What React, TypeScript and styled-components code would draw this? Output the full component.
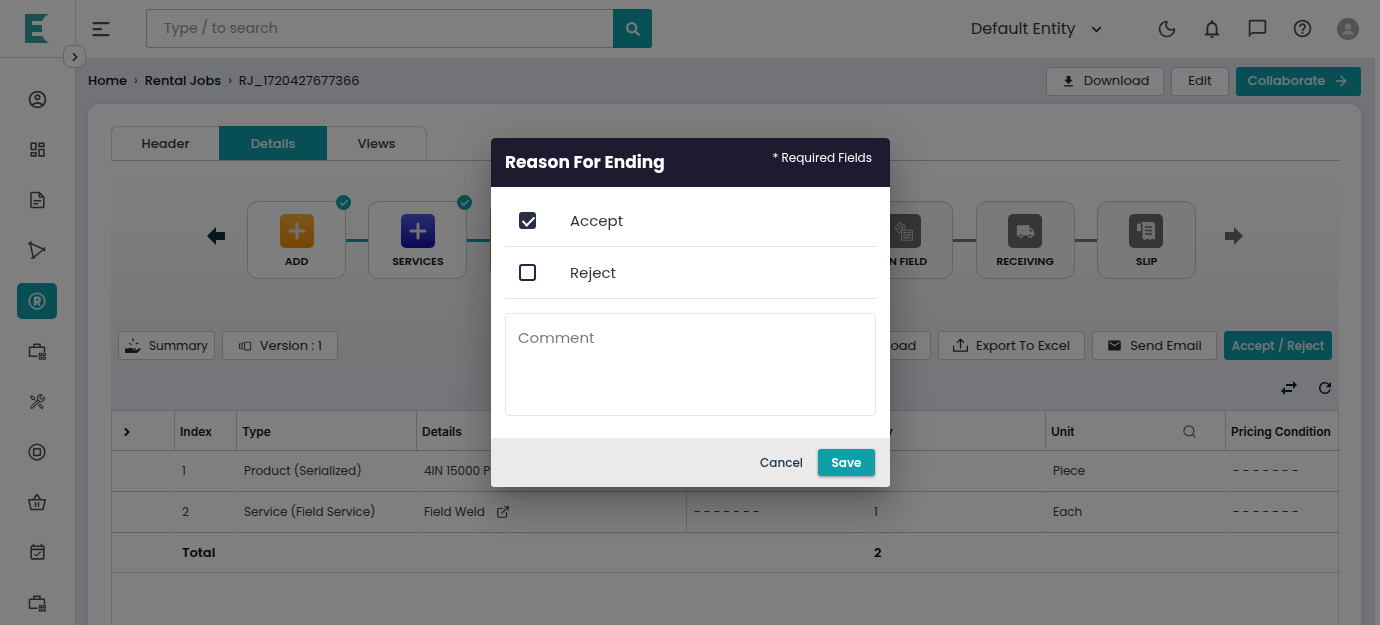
import React from "react";
import styled, { createGlobalStyle, css } from "styled-components";
import {
  MdChatBubbleOutline,
  MdEmail,
  MdFileDownload,
  MdHelpOutline,
  MdLocalShipping,
  MdOutlineAccountCircle,
  MdOutlineDashboard,
  MdOutlineEventAvailable,
  MdOutlineNotifications,
  MdRefresh,
} from "react-icons/md";
import { FaSearch } from "react-icons/fa";
import { VscTools, VscVersions } from "react-icons/vsc";
import { ArrowRight, Check, ChevronDown, ChevronRight, ExternalLink, Moon, Plus, Search } from "lucide-react";

const color = {
  teal: "#0f9fa9",
  navy: "#1c1b2f",
  ink: "#0e2230",
  text: "#1d1f24",
  icon: "#4c4c4c",
  line: "#d3d4d6",
  page: "#e5e7f2",
};

const GlobalStyle = createGlobalStyle`
  * { box-sizing: border-box; }
  body {
    margin: 0;
    font-family: Poppins, Inter, "Liberation Sans", sans-serif;
    font-size: 13px;
    color: ${color.text};
    background: #fff;
  }
  button, input, select, textarea { font: inherit; color: inherit; }
  button { cursor: pointer; }
`;

const Shell = styled.div`
  display: flex;
  height: 100vh;
  overflow: hidden;
`;

/* ---------- sidebar ---------- */

const Sidebar = styled.aside`
  position: relative;
  flex: none;
  width: 76px;
  display: flex;
  flex-direction: column;
  background: #fff;
  border-right: 1px solid ${color.line};
`;

const LogoArea = styled.div`
  height: 58px;
  flex: none;
  display: flex;
  align-items: center;
  justify-content: center;
  padding-right: 1px;
  border-bottom: 1px solid ${color.line};
`;

const ExpandButton = styled.button`
  position: absolute;
  top: 45px;
  right: -11px;
  z-index: 1;
  width: 23px;
  height: 23px;
  padding: 0;
  display: grid;
  place-items: center;
  border: 1px solid #c4c6ca;
  border-radius: 8px;
  background: #fff;
`;

const Nav = styled.nav`
  flex: 1;
  display: flex;
  flex-direction: column;
  align-items: center;
  justify-content: space-between;
  padding: 23px 1px 4px 0;
`;

const NavLink = styled.a<{ $active?: boolean }>`
  width: 40px;
  height: 36px;
  display: grid;
  place-items: center;
  border-radius: 5px;
  color: ${(p) => (p.$active ? "#e8f3f4" : color.icon)};
  background: ${(p) => (p.$active ? color.teal : "transparent")};
`;

/* ---------- top bar ---------- */

const Main = styled.div`
  flex: 1;
  min-width: 0;
  display: flex;
  flex-direction: column;
`;

const TopBar = styled.header`
  flex: none;
  height: 58px;
  display: flex;
  align-items: center;
  padding: 0 21px 1px 16px;
  background: #fff;
`;

const IconButton = styled.button`
  display: grid;
  place-items: center;
  padding: 0;
  border: 0;
  background: none;
  color: ${color.icon};
`;

const SearchForm = styled.form`
  display: flex;
  width: 506px;
  height: 39px;
  margin-left: 36px;
`;

const SearchInput = styled.input`
  flex: 1;
  min-width: 0;
  padding: 0 17px;
  border: 1px solid #b9bcc2;
  border-right: 0;
  border-radius: 3px 0 0 3px;
  font-size: 14px;
  background: #fff;
  &::placeholder { color: #8e94a3; opacity: 1; }
`;

const SearchButton = styled.button`
  width: 39px;
  display: grid;
  place-items: center;
  padding: 0;
  border: 0;
  border-radius: 0 3px 3px 0;
  background: ${color.teal};
  color: #e8f3f4;
`;

const EntityPicker = styled.label`
  position: relative;
  margin-left: auto;
  margin-right: 53px;
  color: #3a3a3a;
  svg {
    position: absolute;
    right: 0;
    top: 5px;
    pointer-events: none;
  }
`;

const EntitySelect = styled.select`
  appearance: none;
  width: 133px;
  padding: 0;
  border: 0;
  background: none;
  font-size: 16px;
  line-height: 24px;
`;

const TopActions = styled.div`
  display: flex;
  align-items: center;
  gap: 24px;
`;

/* ---------- page ---------- */

const Page = styled.main`
  flex: 1;
  min-height: 0;
  margin-right: 5px;
  padding: 0 14px 0 12px;
  display: flex;
  flex-direction: column;
  background: ${color.page};
`;

const PageHead = styled.div`
  flex: none;
  height: 46px;
  display: flex;
  align-items: center;
  justify-content: space-between;
`;

const Crumbs = styled.nav`
  display: flex;
  align-items: center;
  gap: 7px;
  font-size: 13px;
  a { color: #10131c; font-weight: 500; text-decoration: none; }
`;

const ButtonRow = styled.div`
  display: flex;
  align-items: center;
  gap: 7px;
`;

const Button = styled.button<{ $primary?: boolean; $small?: boolean; $width: number }>`
  min-width: ${(p) => p.$width}px;
  height: 29px;
  padding: 0 6px;
  display: flex;
  align-items: center;
  justify-content: center;
  gap: 8px;
  font-size: ${(p) => (p.$small ? 12 : 13)}px;
  white-space: nowrap;
  border: 1px solid #c6c8cc;
  border-radius: 3px;
  background: #fff;
  color: #2a2a2e;
  ${(p) =>
    p.$primary &&
    css`
      border-color: ${color.teal};
      background: ${color.teal};
      color: #e8f3f4;
      font-weight: 500;
    `}
`;

const Card = styled.section`
  flex: 1;
  min-height: 0;
  display: flex;
  flex-direction: column;
  padding: 22px 22px 0 23px;
  border-radius: 12px 12px 0 0;
  background: #fff;
  box-shadow: 0 0 10px rgba(120, 125, 160, 0.16);
`;

const Tabs = styled.div`
  flex: none;
  height: 35px;
  display: flex;
  border-bottom: 1px solid #bdbfc3;
`;

const Tab = styled.button<{ $active?: boolean }>`
  width: 108px;
  padding: 0;
  border: 1px solid ${color.line};
  border-bottom: 0;
  background: #fff;
  color: #3c3c3c;
  font-size: 13px;
  font-weight: 500;
  &:first-child { border-radius: 6px 0 0 0; border-right: 0; }
  &:last-child { width: 100px; border-radius: 0 8px 0 0; border-left: 0; }
  ${(p) =>
    p.$active &&
    css`
      border-color: ${color.teal};
      background: ${color.teal};
      color: #e8f3f4;
    `}
`;

const Workspace = styled.div`
  flex: none;
  display: flex;
  flex-direction: column;
  background: linear-gradient(#fff, #f4f5f8 45%, #ededf3 75%, #e9ebf3);
`;

/* ---------- steps ---------- */

const Stepper = styled.div`
  display: flex;
  align-items: center;
  padding: 40px 96px 52px;
`;

const StepArrow = styled.button<{ $muted?: boolean }>`
  width: 18px;
  height: 18px;
  padding: 0;
  border: 0;
  background: none;
  color: ${(p) => (p.$muted ? "#6c6c6c" : "#10303d")};
  transform: translateY(-4px);
  svg { display: block; }
`;

const StepList = styled.ol`
  flex: 1;
  display: flex;
  align-items: center;
  margin: 0 29px 0 22px;
  padding: 0;
  list-style: none;
`;

const StepItem = styled.li`
  display: flex;
  align-items: center;
  flex: 1 1 auto;
  &:last-child { flex: none; }
`;

const StepCard = styled.div<{ $current?: boolean; $done?: boolean }>`
  position: relative;
  flex: none;
  width: 99px;
  height: 78px;
  display: flex;
  flex-direction: column;
  align-items: center;
  padding-top: 12px;
  gap: 5px;
  border: 1px solid #c6c6c8;
  border-radius: 11px;
  background: ${(p) => (p.$done ? "#fdfdfe" : "#f5f5f7")};
  font-size: 11px;
  line-height: 16px;
  font-weight: 600;
  color: #17171a;
  ${(p) => p.$current && css`border: 2px solid #e8892b;`}
`;

const StepIcon = styled.span<{ $fill: string }>`
  width: 34px;
  height: 34px;
  display: grid;
  place-items: center;
  border-radius: 5px;
  background: ${(p) => p.$fill};
  color: #e2e2e2;
`;

const StepBadge = styled.span`
  position: absolute;
  top: -7px;
  right: -6px;
  width: 15px;
  height: 15px;
  display: grid;
  place-items: center;
  border-radius: 50%;
  background: ${color.teal};
  color: #e8f3f4;
`;

const Connector = styled.span<{ $done?: boolean }>`
  flex: 1;
  height: 3px;
  background: ${(p) => (p.$done ? color.teal : "#78787a")};
`;

/* ---------- table ---------- */

const Toolbar = styled.div`
  display: flex;
  justify-content: space-between;
  padding: 0 7px;
`;

const TableTools = styled.div`
  height: 50px;
  display: flex;
  align-items: center;
  justify-content: flex-end;
  gap: 19px;
  padding: 6px 5px 0 0;
  button { color: ${color.ink}; }
`;

const TableFrame = styled.div`
  flex: 1;
  min-height: 0;
  border: solid ${color.line};
  border-width: 1px 1px 0;
  background: #fff;
`;

const Table = styled.table`
  width: 100%;
  table-layout: fixed;
  border-collapse: separate;
  border-spacing: 0;
`;

const Th = styled.th<{ $open?: boolean }>`
  height: 40px;
  padding: 2px 5px 0;
  text-align: left;
  font-family: Inter, "Liberation Sans", sans-serif;
  font-size: 12px;
  font-weight: 600;
  color: #17171a;
  white-space: nowrap;
  border-bottom: 1px solid #bfc1c9;
  border-right: 1px solid ${(p) => (p.$open ? "transparent" : "#c8cacd")};
  &:last-child { border-right: 0; }
`;

const ExpandTh = styled(Th)`
  padding-left: 9px;
  svg { display: block; }
`;

const HeadLine = styled.div`
  display: flex;
  align-items: center;
  justify-content: space-between;
  padding-right: 23px;
`;

const Td = styled.td<{ $edge?: boolean }>`
  height: 41px;
  padding: 0 7px;
  font-size: 12px;
  color: #3a3c42;
  white-space: nowrap;
  overflow: hidden;
  border-bottom: 1px solid #b9bcc9;
  border-right: 1px solid ${(p) => (p.$edge ? color.line : "transparent")};
`;

const TotalCell = styled.td`
  height: 40px;
  padding: 0 7px;
  font-size: 13px;
  font-weight: 600;
  color: #111;
  border-bottom: 1px solid #d8d8d8;
`;

const LinkedName = styled.span`
  display: flex;
  align-items: center;
  gap: 11px;
`;

/* ---------- dialog ---------- */

const Backdrop = styled.div`
  position: fixed;
  inset: 0;
  z-index: 10;
  display: flex;
  align-items: center;
  justify-content: center;
  padding-left: 1px;
  background: rgba(0, 0, 0, 0.5);
`;

const Dialog = styled.form`
  width: 399px;
  max-width: 100%;
  border-radius: 4px;
  overflow: hidden;
  background: #fff;
  box-shadow: 0 11px 15px -7px rgba(0, 0, 0, 0.2), 0 24px 38px 3px rgba(0, 0, 0, 0.14),
    0 9px 46px 8px rgba(0, 0, 0, 0.12);
`;

const DialogHead = styled.header`
  height: 49px;
  display: flex;
  justify-content: space-between;
  padding: 12px 18px 0 14px;
  background: ${color.navy};
  color: #fff;
  h2 { margin: 0; font-size: 17px; line-height: 24px; font-weight: 700; }
  span { font-size: 12px; line-height: 16px; font-weight: 400; }
`;

const DialogBody = styled.div`
  padding: 8px 14px 22px;
`;

const Option = styled.label`
  height: 52px;
  display: flex;
  align-items: center;
  gap: 34px;
  padding-left: 14px;
  border-bottom: 1px solid #e4e4e4;
  font-size: 15px;
  color: #333;
`;

const Checkbox = styled.input`
  appearance: none;
  position: relative;
  width: 17px;
  height: 17px;
  margin: 0;
  border: 2px solid #1f2844;
  border-radius: 3px;
  background: #fff;
  &:checked { border-color: #2a2f45; background: #2a2f45; }
  &:checked::after {
    content: "";
    position: absolute;
    left: 4px;
    top: 0;
    width: 5px;
    height: 10px;
    border: solid #fff;
    border-width: 0 2px 2px 0;
    transform: rotate(45deg);
  }
`;

const Comment = styled.textarea`
  display: block;
  width: 100%;
  height: 103px;
  margin-top: 14px;
  padding: 14px 12px;
  resize: none;
  border: 1px solid #e6e6e6;
  border-radius: 4px;
  font-size: 15px;
  line-height: 20px;
  &::placeholder { color: #7b7b7b; opacity: 1; }
`;

const DialogFoot = styled.footer`
  height: 49px;
  display: flex;
  align-items: center;
  justify-content: flex-end;
  gap: 15px;
  padding-right: 15px;
  background: #eaeaea;
`;

const DialogButton = styled.button<{ $primary?: boolean }>`
  height: 27px;
  padding: 0;
  border: 0;
  background: none;
  font-size: 12px;
  font-weight: 500;
  color: #1f3444;
  ${(p) =>
    p.$primary &&
    css`
      width: 57px;
      border-radius: 3px;
      background: ${color.teal};
      color: #fff;
      font-weight: 600;
      box-shadow: 0 1px 3px rgba(0, 0, 0, 0.4);
    `}
`;

/* ---------- drawings ---------- */

type LineIconProps = { size?: number; width?: number; children: React.ReactNode };

const LineIcon = ({ size = 18, width = 2, children }: LineIconProps) => (
  <svg
    width={size}
    height={size}
    viewBox="0 0 24 24"
    fill="none"
    stroke="currentColor"
    strokeWidth={width}
    strokeLinejoin="round"
    strokeLinecap="round"
    aria-hidden="true"
  >
    {children}
  </svg>
);

const Logo = () => (
  <svg width="24" height="29" viewBox="0 0 24 29" aria-hidden="true">
    <path
      fill="#35a39f"
      d="M0 0h24l-4 2.500-3 4.500H7v4h10v7H7v4h10l3 4 4 3H0z"
    />
  </svg>
);

const DocumentIcon = () => (
  <LineIcon>
    <path d="M4 2h11l6 6v14H4zM15 2v6h6M8 13h9M8 17h5" />
  </LineIcon>
);

const PlayIcon = () => (
  <LineIcon>
    <path d="M3 3l18 8L7 22zM1 4l3-3M22 9v4M5 23l4-1" />
  </LineIcon>
);

const RegisteredIcon = () => (
  <LineIcon>
    <circle cx="12" cy="12" r="10.5" />
    <path strokeWidth="3" strokeLinecap="butt" d="M9.500 18V7.500H13a2.500 2.500 0 0 1 0 5.500H9.500M12.500 13l3 5" />
  </LineIcon>
);

const BriefcaseIcon = () => (
  <LineIcon>
    <path d="M12 19H2V7h20v6M8 7V3h8v4" />
    <path strokeWidth="1.500" d="M15 15h3v3h-3zM20 15h3v3h-3zM15 20h3v3h-3zM20 20h3v3h-3z" />
  </LineIcon>
);

const TargetIcon = () => (
  <LineIcon>
    <circle cx="12" cy="12" r="10.500" />
    <rect x="7.500" y="7.500" width="9" height="9" rx="2.500" />
    <path strokeWidth="1" d="M6.500 6.500l1 1M17.500 6.500l-1 1M6.500 17.500l1-1M17.500 17.500l-1-1" />
  </LineIcon>
);

const BasketIcon = () => (
  <LineIcon>
    <path d="M1 9h22l-3 13H4zM7 9l5-7 5 7M10 13v5M14 13v5" />
  </LineIcon>
);

const MenuIcon = () => (
  <LineIcon width={3}>
    <path d="M2 4h20M2 12h10M2 20h20" />
  </LineIcon>
);

const AvatarIcon = () => (
  <svg width="22" height="22" viewBox="0 0 22 22" aria-hidden="true">
    <circle cx="11" cy="11" r="11" fill="#a6a6a6" />
    <circle cx="11" cy="8.500" r="3" fill="#e0e0e0" />
    <path fill="#e0e0e0" d="M5.500 16.500c0-3 3-4 5.500-4s5.500 1 5.500 4z" />
  </svg>
);

const BlockArrow = ({ flip }: { flip?: boolean }) => (
  <svg width="18" height="18" viewBox="0 0 18 18" aria-hidden="true">
    <path fill="currentColor" d={flip ? "M18 9L9 0v5H0v8h9v5z" : "M0 9l9-9v5h9v8H9v5z"} />
  </svg>
);

const SwapIcon = () => (
  <svg width="16" height="14" viewBox="0 0 16 14" aria-hidden="true">
    <path stroke="currentColor" strokeWidth="2" d="M5 4h8M3 10h8" />
    <path fill="currentColor" d="M12 0l4 4-4 4zM4 6l-4 4 4 4z" />
  </svg>
);

const HandIcon = () => (
  <svg width="16" height="16" viewBox="0 0 16 16" fill="currentColor" aria-hidden="true">
    <path d="M0 10.500h3c1.500-1.300 3.500-1 4.500 0h3c.8 0 .8 1 0 1.200H7.500v.6H11l3.400-2c1-.5 1.800.4 1.200 1.100L12 15H0z" />
    <path d="M7.500 0l1.500 2-.5 1.500L7 2zM3.500 5l2.500.5L7.500 7 5 6.600zM10.500 5.500l2.500-1 .5.7-2 1.300z" />
  </svg>
);

const UploadIcon = () => (
  <LineIcon size={15}>
    <path d="M1 13v8h22v-8M12 16V3M7 7l5-5 5 5" />
  </LineIcon>
);

const FieldIcon = () => (
  <LineIcon size={20} width={1}>
    <path d="M9 20v-9h13v12H9zM11 14h9M11 17h9M11 20h9M13 13v2M17 16v2M14 19v2" />
    <circle cx="8" cy="8" r="2.500" />
    <path d="M7 14H5l-.5-2L2 11l1-2.500L1 7l1.500-2L5 5l.5-3h3l1 2.500L12 4l1.500 2L12 8l2 1" />
  </LineIcon>
);

const SlipIcon = () => (
  <svg width="20" height="20" viewBox="0 0 20 20" aria-hidden="true">
    <path fill="currentColor" d="M3 1h13c2 0 3 1 3 3v15l-2.500-1.500L14 19l-2.500-1.500L9 19l-2.500-1.500V4C6.500 2 5 1 3 1zM1 4c0-2 4-2 4 0v6H1z" />
    <path stroke="#6c6c6c" strokeWidth="1.500" d="M9 6h7M9 9.500h7M9 13h7" />
  </svg>
);

/* ---------- data ---------- */

const navItems = [
  { label: "Profile", icon: <MdOutlineAccountCircle size={21} /> },
  { label: "Dashboard", icon: <MdOutlineDashboard size={19} /> },
  { label: "Documents", icon: <DocumentIcon /> },
  { label: "Activity", icon: <PlayIcon /> },
  { label: "Rental Jobs", icon: <RegisteredIcon />, active: true },
  { label: "Assets", icon: <BriefcaseIcon /> },
  { label: "Tools", icon: <VscTools size={17} /> },
  { label: "Support", icon: <TargetIcon /> },
  { label: "Orders", icon: <BasketIcon /> },
  { label: "Schedule", icon: <MdOutlineEventAvailable size={19} /> },
  { label: "Inventory", icon: <BriefcaseIcon /> },
];

const plus = <Plus size={24} strokeWidth={3} />;
const gray = "#6c6c6c";

const steps = [
  { label: "ADD", fill: "linear-gradient(#f5ad35, #ef8b0a)", icon: plus, done: true },
  { label: "SERVICES", fill: "linear-gradient(#4a5fd8, #1c0cae)", icon: plus, done: true },
  { label: "QUOTE", fill: "#e8892b", icon: plus, current: true },
  { label: "ORDER", fill: gray, icon: plus },
  { label: "LOADING", fill: gray, icon: plus },
  { label: "ON FIELD", fill: gray, icon: <FieldIcon /> },
  { label: "RECEIVING", fill: gray, icon: <MdLocalShipping size={19} /> },
  { label: "SLIP", fill: gray, icon: <SlipIcon /> },
];

const dashes = "- - - - - - -";

const rows = [
  { index: 1, type: "Product (Serialized)", details: "4IN 15000 PSI Valve", qty: 1, unit: "Piece" },
  { index: 2, type: "Service (Field Service)", details: "Field Weld", qty: 1, unit: "Each", link: true },
];

const columnWidths = [63, 62, 180, 270, 180, 179, 180, 114];

/* ---------- screen ---------- */

export default function App() {
  return (
    <>
      <GlobalStyle />
      <Shell>
        <Sidebar>
          <LogoArea>
            <Logo />
          </LogoArea>
          <ExpandButton aria-label="Expand menu">
            <ChevronRight size={14} />
          </ExpandButton>
          <Nav>
            {navItems.map((item) => (
              <NavLink key={item.label} href="#" aria-label={item.label} $active={item.active}>
                {item.icon}
              </NavLink>
            ))}
          </Nav>
        </Sidebar>
        <Main>
          <TopBar>
            <IconButton aria-label="Menu">
              <MenuIcon />
            </IconButton>
            <SearchForm>
              <SearchInput aria-label="Search" placeholder="Type / to search" />
              <SearchButton aria-label="Search" type="button">
                <FaSearch size={14} />
              </SearchButton>
            </SearchForm>
            <EntityPicker>
              <EntitySelect aria-label="Entity">
                <option>Default Entity</option>
              </EntitySelect>
              <ChevronDown size={15} strokeWidth={3} />
            </EntityPicker>
            <TopActions>
              <IconButton aria-label="Dark mode"><Moon size={20} /></IconButton>
              <IconButton aria-label="Notifications"><MdOutlineNotifications size={22} /></IconButton>
              <IconButton aria-label="Messages"><MdChatBubbleOutline size={21} /></IconButton>
              <IconButton aria-label="Help"><MdHelpOutline size={21} /></IconButton>
              <IconButton aria-label="Account"><AvatarIcon /></IconButton>
            </TopActions>
          </TopBar>
          <Page>
            <PageHead>
              <Crumbs aria-label="Breadcrumb">
                <a href="#">Home</a>
                <span>›</span>
                <a href="#">Rental Jobs</a>
                <span>›</span>
                <span>RJ_1720427677366</span>
              </Crumbs>
              <ButtonRow>
                <Button $width={118}><MdFileDownload size={15} />Download</Button>
                <Button $width={58}>Edit</Button>
                <Button $width={125} $primary>Collaborate<ArrowRight size={16} /></Button>
              </ButtonRow>
            </PageHead>
            <Card>
              <Tabs role="tablist">
                <Tab role="tab">Header</Tab>
                <Tab role="tab" aria-selected="true" $active>Details</Tab>
                <Tab role="tab">Views</Tab>
              </Tabs>
              <Workspace>
                <Stepper>
                  <StepArrow aria-label="Previous"><BlockArrow /></StepArrow>
                  <StepList>
                    {steps.map((step, i) => (
                      <StepItem key={step.label}>
                        <StepCard $current={step.current} $done={step.done}>
                          <StepIcon $fill={step.fill}>{step.icon}</StepIcon>
                          {step.label}
                          {step.done && (
                            <StepBadge><Check size={10} strokeWidth={3} /></StepBadge>
                          )}
                        </StepCard>
                        {i < steps.length - 1 && <Connector $done={step.done} />}
                      </StepItem>
                    ))}
                  </StepList>
                  <StepArrow aria-label="Next" $muted><BlockArrow flip /></StepArrow>
                </Stepper>
                <Toolbar>
                  <ButtonRow>
                    <Button $width={96} $small><HandIcon />Summary</Button>
                    <Button $width={116}><VscVersions size={14} />Version : 1</Button>
                  </ButtonRow>
                  <ButtonRow>
                    <Button $width={118}><MdFileDownload size={15} />Download</Button>
                    <Button $width={147}><UploadIcon />Export To Excel</Button>
                    <Button $width={125}><MdEmail size={15} />Send Email</Button>
                    <Button $width={108} $small $primary>Accept / Reject</Button>
                  </ButtonRow>
                </Toolbar>
                <TableTools>
                  <IconButton aria-label="Swap columns"><SwapIcon /></IconButton>
                  <IconButton aria-label="Refresh"><MdRefresh size={18} /></IconButton>
                </TableTools>
              </Workspace>
              <TableFrame>
                <Table>
                  <colgroup>
                    {columnWidths.map((w, i) => (
                      <col key={i} width={w} />
                    ))}
                  </colgroup>
                  <thead>
                    <tr>
                      <ExpandTh aria-label="Expand"><ChevronRight size={12} strokeWidth={4} /></ExpandTh>
                      <Th>Index</Th>
                      <Th>Type</Th>
                      <Th>Details</Th>
                      <Th $open>Comment</Th>
                      <Th>Qty</Th>
                      <Th><HeadLine>Unit<Search size={15} color="#666" /></HeadLine></Th>
                      <Th>Pricing Condition</Th>
                    </tr>
                  </thead>
                  <tbody>
                    {rows.map((row) => (
                      <tr key={row.index}>
                        <Td />
                        <Td>{row.index}</Td>
                        <Td>{row.type}</Td>
                        <Td $edge>
                          <LinkedName>
                            {row.details}
                            {row.link && <ExternalLink size={14} />}
                          </LinkedName>
                        </Td>
                        <Td>{dashes}</Td>
                        <Td>{row.qty}</Td>
                        <Td>{row.unit}</Td>
                        <Td>{dashes}</Td>
                      </tr>
                    ))}
                    <tr>
                      <TotalCell />
                      <TotalCell colSpan={4}>Total</TotalCell>
                      <TotalCell colSpan={3}>2</TotalCell>
                    </tr>
                  </tbody>
                </Table>
              </TableFrame>
            </Card>
          </Page>
        </Main>
      </Shell>
      <Backdrop>
        <Dialog role="dialog" aria-modal="true" aria-labelledby="reason-title">
          <DialogHead>
            <h2 id="reason-title">Reason For Ending</h2>
            <span>* Required Fields</span>
          </DialogHead>
          <DialogBody>
            <Option><Checkbox type="checkbox" defaultChecked />Accept</Option>
            <Option><Checkbox type="checkbox" />Reject</Option>
            <Comment aria-label="Comment" placeholder="Comment" />
          </DialogBody>
          <DialogFoot>
            <DialogButton type="button">Cancel</DialogButton>
            <DialogButton type="button" $primary>Save</DialogButton>
          </DialogFoot>
        </Dialog>
      </Backdrop>
    </>
  );
}
